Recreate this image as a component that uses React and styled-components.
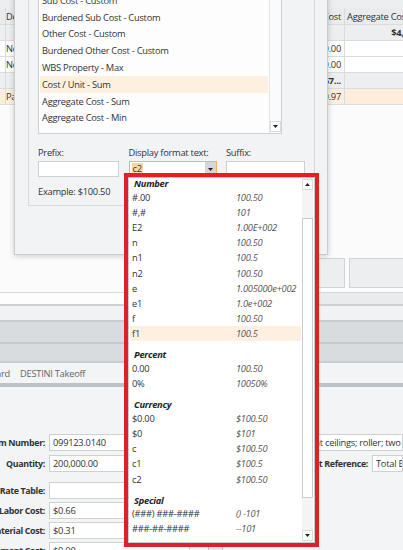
import React from "react";
import styled, { createGlobalStyle } from "styled-components";

const GlobalStyle = createGlobalStyle`
  html, body { margin: 0; padding: 0; overflow: hidden; background: #fbfbfb; }
  body {
    font-family: "Open Sans", "Noto Sans", sans-serif;
    font-size: 9.3px;
    letter-spacing: -0.25px;
    color: #333;
  }
  * { box-sizing: border-box; }
`;

const Screen = styled.div`
  position: relative;
  width: 403px;
  height: 550px;
  overflow: hidden;
  display: flex;
  flex-direction: column;
  background: #fbfbfb;
`;

const TopBand = styled.div`
  flex: none;
  height: 8px;
  background: #eceeef;
`;

/* ---------- background grid ---------- */
const GridRow = styled.div`
  flex: none;
  width: 453px;
  height: ${(p) => p.$h || 16}px;
  display: grid;
  grid-template-columns: 4px 261px 80px 108px;
  background: ${(p) =>
    p.$kind === "header" ? "#e9ebec" : p.$kind === "group" ? "#eceef0" : p.$kind === "sel" ? "#fdeedc" : "#ffffff"};
  font-weight: ${(p) => (p.$kind === "group" ? 700 : 400)};
  border-bottom: 1px solid #d9dcde;
`;

const Cell = styled.div`
  border-right: 1px solid #d9dcde;
  padding: 0 3px 0 ${(p) => (p.$indent ? 22 : p.$right ? 3 : 2)}px;
  display: flex;
  align-items: center;
  justify-content: ${(p) => (p.$right ? "flex-end" : "flex-start")};
  white-space: nowrap;
  overflow: hidden;
  color: #333;
`;

const Filler = styled.div`
  flex: none;
  height: 187px;
  display: flex;
  align-items: flex-end;
  justify-content: flex-end;
  padding-bottom: 4px;
  background: #fbfbfb;
`;

const ButtonRow = styled.div`
  display: flex;
  gap: 4px;
  margin-right: -30px;
`;

const FlatButton = styled.div`
  width: ${(p) => p.$w}px;
  height: 30px;
  background: #eceef0;
  border: 1px solid #cfd3d5;
`;

const Line = styled.div`
  flex: none;
  height: ${(p) => p.$h}px;
  background: ${(p) => p.$c};
`;

const Strip = styled.div`
  flex: none;
  height: ${(p) => p.$h}px;
  display: flex;
`;

const StripPart = styled.div`
  flex: ${(p) => (p.$grow ? 1 : "none")};
  width: ${(p) => (p.$w ? `${p.$w}px` : "auto")};
  background: ${(p) => p.$c};
`;

const Band = styled.div`
  flex: none;
  height: ${(p) => p.$h}px;
  background: ${(p) => p.$c};
`;

const TabStrip = styled.div`
  flex: none;
  height: 20px;
  background: #f3f4f5;
  display: flex;
  align-items: center;
  gap: 10px;
  color: #666;
`;

const Tab = styled.div`
  display: flex;
  justify-content: flex-end;
  white-space: nowrap;
  width: ${(p) => (p.$w ? `${p.$w}px` : "auto")};
`;

/* ---------- bottom form ---------- */
const Form = styled.div`
  flex: 1;
  background: #f3f4f5;
  padding-top: 47px;
  display: flex;
  flex-direction: column;
`;

const FormRow = styled.div`
  display: flex;
  align-items: center;
  margin-top: ${(p) => p.$mt || 0}px;
  white-space: nowrap;
`;

const FieldLabel = styled.div`
  flex: none;
  width: ${(p) => p.$w}px;
  display: flex;
  justify-content: flex-end;
  font-weight: 700;
  font-size: 8.9px;
  letter-spacing: -0.35px;
  color: #333;
  margin-right: 4px;
`;

const TextBox = styled.div`
  flex: ${(p) => (p.$w ? "none" : 1)};
  width: ${(p) => (p.$w ? `${p.$w}px` : "auto")};
  height: 17px;
  background: #fff;
  border: 1px solid #cdd1d4;
  padding: 0 3px;
  display: flex;
  align-items: center;
  overflow: hidden;
  color: #333;
`;

const Gap = styled.div`
  flex: none;
  width: ${(p) => p.$w}px;
`;

const TinyButton = styled.div`
  flex: none;
  width: 15px;
  height: 17px;
  border: 1px solid #b9bec1;
  background: #e4e7e9;
  margin-left: 18px;
`;

/* ---------- dialog ---------- */
const Dialog = styled.div`
  position: absolute;
  left: 14px;
  top: -24px;
  width: 314px;
  height: 279px;
  background: #f2f3f5;
  border: 1px solid #c9cdd0;
  padding: 0 12px 0 13px;
  box-shadow: 0 1px 6px rgba(0, 0, 0, 0.2);
`;

const GroupBox = styled.div`
  margin-top: 6px;
  height: 223px;
  border: 1px solid #d6dadd;
  padding: 6px 9px 0;
`;

const ListBox = styled.div`
  width: 244px;
  height: 144px;
  background: #fdfdfd;
  border: 1px solid #cdd1d4;
  display: flex;
  overflow: hidden;
`;

const ListItems = styled.div`
  flex: 1;
  padding-top: 1px;
  display: flex;
  flex-direction: column;
`;

const ListItem = styled.div`
  flex: none;
  height: 16.8px;
  margin: 0 1px;
  padding-left: 2px;
  display: flex;
  align-items: center;
  white-space: nowrap;
  background: ${(p) => (p.$sel ? "#fdf0e0" : "transparent")};
  color: #333;
`;

const VScroll = styled.div`
  flex: none;
  width: 12px;
  display: flex;
  flex-direction: column;
  border-left: 1px solid #e3e5e7;
  background: #fbfbfb;
  padding: 1px 0;
`;

const ScrollButton = styled.div`
  flex: none;
  width: 11px;
  height: 11px;
  background: #fff;
  border: 1px solid #dadde0;
  display: flex;
  align-items: center;
  justify-content: center;
`;

const ScrollSpace = styled.div`
  flex: ${(p) => (p.$h ? "none" : 1)};
  height: ${(p) => (p.$h ? `${p.$h}px` : "auto")};
`;

const Thumb = styled.div`
  flex: none;
  width: 11px;
  height: ${(p) => p.$h}px;
  background: #fff;
  border: 1px solid #c9cccf;
`;

const Fields = styled.div`
  margin-top: 12px;
  display: grid;
  grid-template-columns: 81px 88px 79px;
  column-gap: 9.5px;
`;

const Field = styled.div`
  display: flex;
  flex-direction: column;
  gap: 2px;
`;

const SmallLabel = styled.div`
  height: 13px;
  line-height: 13px;
  white-space: nowrap;
  color: #333;
`;

const Input = styled.div`
  height: 16px;
  background: #fff;
  border: 1px solid ${(p) => (p.$focus ? "#f0b45f" : "#cdd1d4")};
  display: flex;
  align-items: stretch;
`;

const Selected = styled.span`
  align-self: center;
  margin-left: 2px;
  padding: 0 1px;
  line-height: 12px;
  background: #fbd5a0;
  color: #333;
`;

const ComboButton = styled.div`
  margin-left: auto;
  width: 11px;
  background: #d3d7da;
  display: flex;
  align-items: center;
  justify-content: center;
`;

const Example = styled.div`
  margin-top: 8px;
  height: 13px;
  line-height: 13px;
  color: #333;
`;

/* ---------- dropdown popup ---------- */
const Popup = styled.div`
  position: absolute;
  left: 124px;
  top: 173px;
  width: 195px;
  height: 374px;
  border: 4px solid #e31e25;
  background: #fff;
  display: flex;
`;

const PopupInner = styled.div`
  flex: 1;
  border: 1px solid #c9cccf;
  display: flex;
`;

const PopupList = styled.div`
  flex: 1;
  display: flex;
  flex-direction: column;
`;

const GroupHead = styled.div`
  flex: none;
  height: 11.5px;
  line-height: 11.5px;
  margin-top: ${(p) => (p.$first ? 0 : 8)}px;
  padding-left: 5px;
  font-weight: 700;
  font-style: italic;
  color: #222;
`;

const FmtRow = styled.div`
  flex: none;
  height: 15.2px;
  margin: 0 1px;
  padding-left: 2px;
  display: grid;
  grid-template-columns: 104px 1fr;
  align-items: center;
  white-space: nowrap;
  background: ${(p) => (p.$sel ? "#fdf0e0" : "transparent")};
`;

const FmtCode = styled.span`
  color: #333;
`;

const FmtValue = styled.span`
  font-style: italic;
  color: #555;
`;

const PopupScroll = styled.div`
  flex: none;
  width: 11px;
  margin-right: 1px;
  display: flex;
  flex-direction: column;
  padding: 1px 0;
  background: #f4f4f4;
`;

const Arrow = ({ up }) => (
  <svg width="5" height="3" viewBox="0 0 5 3">
    <polygon points={up ? "0,3 5,3 2.5,0" : "0,0 5,0 2.5,3"} fill="#222" />
  </svg>
);

const groups = [
  {
    name: "Number",
    rows: [
      ["#.00", "100.50"],
      ["#,#", "101"],
      ["E2", "1.00E+002"],
      ["n", "100.50"],
      ["n1", "100.5"],
      ["n2", "100.50"],
      ["e", "1.005000e+002"],
      ["e1", "1.0e+002"],
      ["f", "100.50"],
      ["f1", "100.5", true],
    ],
  },
  {
    name: "Percent",
    rows: [
      ["0.00", "100.50"],
      ["0%", "10050%"],
    ],
  },
  {
    name: "Currency",
    rows: [
      ["$0.00", "$100.50"],
      ["$0", "$101"],
      ["c", "$100.50"],
      ["c1", "$100.5"],
      ["c2", "$100.50"],
    ],
  },
  {
    name: "Special",
    rows: [
      ["(###) ###-####", "() -101"],
      ["###-##-####", "--101"],
    ],
  },
];

const listItems = [
  "Sub Cost - Custom",
  "Burdened Sub Cost - Custom",
  "Other Cost - Custom",
  "Burdened Other Cost - Custom",
  "WBS Property - Max",
  "Cost / Unit - Sum",
  "Aggregate Cost - Sum",
  "Aggregate Cost - Min",
];

export default function App() {
  return (
    <Screen>
      <GlobalStyle />
      <TopBand />
      <GridRow $kind="header" $h={17}>
        <Cell />
        <Cell>Description</Cell>
        <Cell $right>Unit Cost</Cell>
        <Cell>Aggregate Cost</Cell>
      </GridRow>
      <GridRow $kind="group">
        <Cell />
        <Cell $indent>09 91 23 Interior Painting</Cell>
        <Cell $right />
        <Cell $right>$4,357,011.49</Cell>
      </GridRow>
      <GridRow>
        <Cell />
        <Cell>New walls</Cell>
        <Cell $right>$250.00</Cell>
        <Cell $right />
      </GridRow>
      <GridRow>
        <Cell />
        <Cell>New ceilings</Cell>
        <Cell $right>$180.00</Cell>
        <Cell $right />
      </GridRow>
      <GridRow $kind="group">
        <Cell />
        <Cell $indent>Painting</Cell>
        <Cell $right>$4,359,567...</Cell>
        <Cell $right>$15,902.66</Cell>
      </GridRow>
      <GridRow $kind="sel">
        <Cell />
        <Cell>Paint ceilings</Cell>
        <Cell $right>$540.97</Cell>
        <Cell $right />
      </GridRow>
      <Filler>
        <ButtonRow>
          <FlatButton $w={29} />
          <FlatButton $w={84} />
        </ButtonRow>
      </Filler>
      <Line $h={1} $c="#d6d9db" />
      <Strip $h={11}>
        <StripPart $grow $c="#fdfdfd" />
        <StripPart $w={90} $c="#e9ebec" />
      </Strip>
      <Line $h={2} $c="#cdd1d3" />
      <Band $h={14} $c="#f1f2f3" />
      <Line $h={2} $c="#c9cdcf" />
      <Band $h={20} $c="#d8dcde" />
      <Line $h={2} $c="#c4c9cb" />
      <Band $h={17} $c="#d8dcde" />
      <Line $h={2} $c="#c8cdcf" />
      <TabStrip>
        <Tab $w={10}>Dashboard</Tab>
        <Tab>DESTINI Takeoff</Tab>
      </TabStrip>
      <Line $h={4} $c="#bcc3c6" />
      <Form>
        <FormRow>
          <FieldLabel $w={45}>Item Number:</FieldLabel>
          <TextBox $w={141}>099123.0140</TextBox>
          <Gap $w={10} />
          <FieldLabel $w={94}>Description:</FieldLabel>
          <TextBox>Paint ceilings; roller; two coats</TextBox>
        </FormRow>
        <FormRow $mt={4}>
          <FieldLabel $w={45}>Quantity:</FieldLabel>
          <TextBox $w={141}>200,000.00</TextBox>
          <Gap $w={10} />
          <FieldLabel $w={168}>Unit Reference:</FieldLabel>
          <TextBox>Total Building Area</TextBox>
        </FormRow>
        <FormRow $mt={10}>
          <FieldLabel $w={45}>Rate Table:</FieldLabel>
          <TextBox $w={141} />
        </FormRow>
        <FormRow $mt={3}>
          <FieldLabel $w={45}>Labor Cost:</FieldLabel>
          <TextBox $w={141}>$0.66</TextBox>
        </FormRow>
        <FormRow $mt={3}>
          <FieldLabel $w={45}>Material Cost:</FieldLabel>
          <TextBox $w={141}>$0.31</TextBox>
        </FormRow>
        <FormRow $mt={3}>
          <FieldLabel $w={45}>Equipment Cost:</FieldLabel>
          <TextBox $w={141}>$0.00</TextBox>
          <TinyButton />
        </FormRow>
      </Form>

      <Dialog>
        <GroupBox>
          <ListBox>
            <ListItems>
              {listItems.map((t) => (
                <ListItem key={t} $sel={t === "Cost / Unit - Sum"}>
                  {t}
                </ListItem>
              ))}
            </ListItems>
            <VScroll>
              <ScrollSpace />
              <ScrollButton>
                <Arrow />
              </ScrollButton>
            </VScroll>
          </ListBox>
          <Fields>
            <Field>
              <SmallLabel>Prefix:</SmallLabel>
              <Input />
            </Field>
            <Field>
              <SmallLabel>Display format text:</SmallLabel>
              <Input $focus>
                <Selected>c2</Selected>
                <ComboButton>
                  <Arrow />
                </ComboButton>
              </Input>
            </Field>
            <Field>
              <SmallLabel>Suffix:</SmallLabel>
              <Input />
            </Field>
          </Fields>
          <Example>Example: $100.50</Example>
        </GroupBox>
      </Dialog>

      <Popup>
        <PopupInner>
          <PopupList>
            {groups.map((g, gi) => (
              <React.Fragment key={g.name}>
                <GroupHead $first={gi === 0}>{g.name}</GroupHead>
                {g.rows.map(([code, val, sel]) => (
                  <FmtRow key={code} $sel={sel}>
                    <FmtCode>{code}</FmtCode>
                    <FmtValue>{val}</FmtValue>
                  </FmtRow>
                ))}
              </React.Fragment>
            ))}
          </PopupList>
          <PopupScroll>
            <ScrollButton>
              <Arrow up />
            </ScrollButton>
            <ScrollSpace $h={28} />
            <Thumb $h={280} />
            <ScrollSpace />
            <ScrollButton>
              <Arrow />
            </ScrollButton>
          </PopupScroll>
        </PopupInner>
      </Popup>
    </Screen>
  );
}
